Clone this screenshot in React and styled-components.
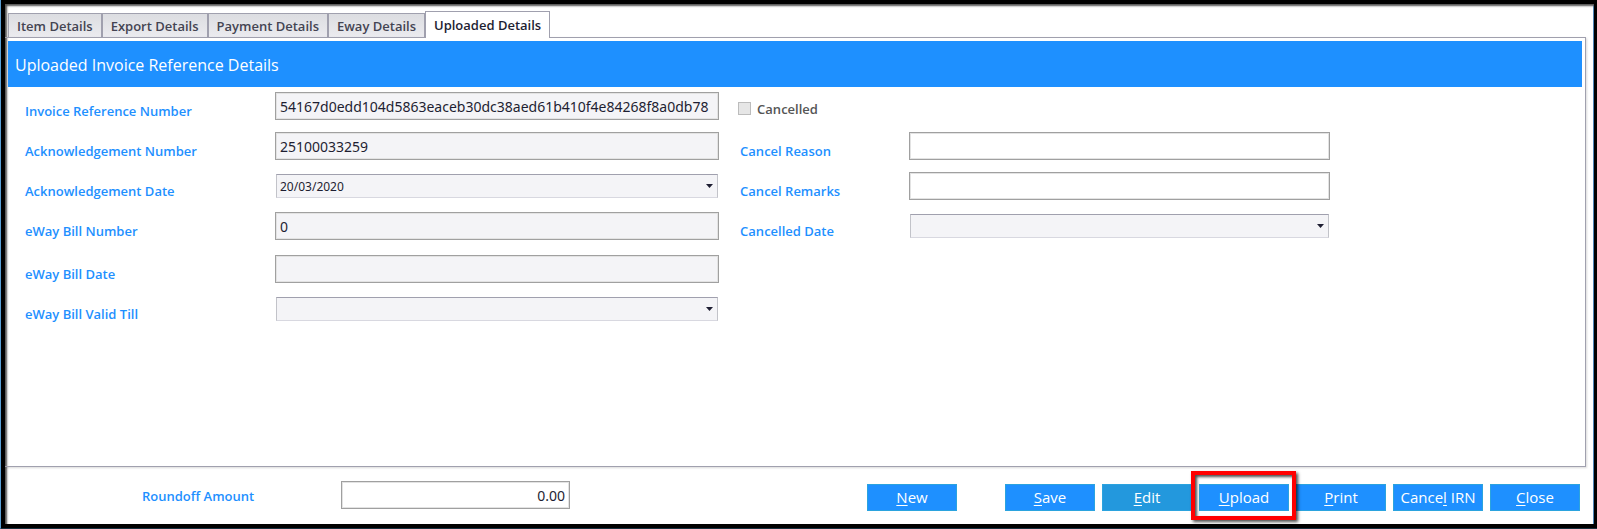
import React, {useState} from 'react';
import styled, {createGlobalStyle, css} from 'styled-components';

const colors = {
  primary: '#1e90ff',
  primaryDim: '#2398dd',
  buttonBorder: '#2ba3de',
  text: '#1e1e32',
  tabText: '#444452',
  line: '#a0a0ae',
  fieldBorder: '#a0a0a0',
  fieldInner: '#e3e3e3',
  disabled: '#f4f4f7',
  highlight: '#ff0000',
};

const tabs = [
  'Item Details',
  'Export Details',
  'Payment Details',
  'Eway Details',
  'Uploaded Details',
];

const SelectField = ({id, value}) => (
  <SelectWrap>
    <Select id={id} defaultValue={value}>
      <option value={value}>{value}</option>
    </Select>
    <Arrow viewBox="0 0 7 4" aria-hidden="true">
      <path d="M0 0h7L3.5 4z" />
    </Arrow>
  </SelectWrap>
);

const App = () => {
  const [active, setActive] = useState('Uploaded Details');

  return (
    <>
      <GlobalStyle />
      <Window>
        <Tabs role="tablist">
          {tabs.map((tab) => (
            <Tab
              key={tab}
              type="button"
              role="tab"
              aria-selected={tab === active}
              $active={tab === active}
              onClick={() => setActive(tab)}
            >
              {tab}
            </Tab>
          ))}
        </Tabs>

        <Panel>
          <Title>Uploaded Invoice Reference Details</Title>
          <Form>
            <InvoiceColumn>
              <Group>
                <Row>
                  <Label htmlFor="irn">Invoice Reference Number</Label>
                  <Input
                    id="irn"
                    readOnly
                    $muted
                    value="54167d0edd104d5863eaceb30dc38aed61b410f4e84268f8a0db78"
                  />
                </Row>
                <Row>
                  <Label htmlFor="ack-number">Acknowledgement Number</Label>
                  <Input id="ack-number" readOnly $muted value="25100033259" />
                </Row>
                <Row>
                  <Label htmlFor="ack-date">Acknowledgement Date</Label>
                  <SelectField id="ack-date" value="20/03/2020" />
                </Row>
                <Row>
                  <Label htmlFor="eway-number">eWay Bill Number</Label>
                  <Input id="eway-number" readOnly $muted value="0" />
                </Row>
              </Group>
              <Group>
                <Row>
                  <Label htmlFor="eway-date">eWay Bill Date</Label>
                  <Input id="eway-date" readOnly $muted value="" />
                </Row>
                <Row>
                  <Label htmlFor="eway-valid">eWay Bill Valid Till</Label>
                  <SelectField id="eway-valid" value="" />
                </Row>
              </Group>
            </InvoiceColumn>

            <CancelColumn>
              <Group>
                <CheckRow>
                  <Checkbox id="cancelled" type="checkbox" disabled />
                  <CheckLabel htmlFor="cancelled">Cancelled</CheckLabel>
                </CheckRow>
                <Row>
                  <CancelLabel htmlFor="reason">Cancel Reason</CancelLabel>
                  <Input id="reason" />
                </Row>
                <Row>
                  <CancelLabel htmlFor="remarks">Cancel Remarks</CancelLabel>
                  <Input id="remarks" />
                </Row>
                <Row>
                  <CancelLabel htmlFor="cancel-date">Cancelled Date</CancelLabel>
                  <SelectField id="cancel-date" value="" />
                </Row>
              </Group>
            </CancelColumn>
          </Form>
        </Panel>

        <Footer>
          <RoundoffLabel htmlFor="roundoff">Roundoff Amount</RoundoffLabel>
          <RoundoffInput id="roundoff" defaultValue="0.00" />
          <NewAction>
            <Button type="button">
              <u>N</u>ew
            </Button>
          </NewAction>
          <Actions>
            <Button type="button">
              <u>S</u>ave
            </Button>
            <Button type="button" $dim>
              <u>E</u>dit
            </Button>
            <Highlighted>
              <Button type="button">
                <u>U</u>pload
              </Button>
            </Highlighted>
            <Button type="button">
              <u>P</u>rint
            </Button>
            <Button type="button">
              Cance<u>l</u> IRN
            </Button>
            <Button type="button">
              <u>C</u>lose
            </Button>
          </Actions>
        </Footer>
      </Window>
    </>
  );
};

export default App;

const GlobalStyle = createGlobalStyle`
  * {
    box-sizing: border-box;
  }
  body {
    margin: 0;
    background: #000;
    border-left: 1px solid #5aa0d6;
    border-bottom: 1px solid #17303f;
  }
  body,
  button {
    font-family: 'Open Sans', 'Noto Sans', sans-serif;
  }
  input,
  select {
    font-family: 'Noto Sans', 'Open Sans', sans-serif;
  }
`;

const Window = styled.div`
  display: flex;
  flex-direction: column;
  min-height: calc(100vh - 1px);
  border: 4px solid #000;
  border-right-width: 3px;
  background: #fff;
  box-shadow: inset 2px 2px 2px #555, inset -1px 0 0 #4f86b8;
`;

/* tabs */
const Tabs = styled.div`
  display: flex;
  align-items: flex-end;
  padding: 7px 3px 0;
`;

const Tab = styled.button`
  height: 24px;
  padding: 0 8px;
  border: 1px solid ${colors.line};
  border-bottom: none;
  background: linear-gradient(#dcdde1, #ebebef);
  color: ${colors.tabText};
  font-size: 13px;
  font-weight: 600;
  line-height: 22px;
  white-space: nowrap;

  ${(props) =>
    props.$active &&
    css`
      position: relative;
      height: 27px;
      margin-bottom: -1px;
      background: #fff;
      color: ${colors.text};
    `}
`;

/* panel */
const Panel = styled.div`
  flex: 1;
  margin-right: 8px;
  padding: 3px 3px 0;
  border: 1px solid ${colors.line};
  border-left: none;
  box-shadow: 1px 1px 2px rgba(0, 0, 0, 0.15);
`;

const Title = styled.h1`
  margin: 0;
  padding: 2px 0 0 7px;
  background: ${colors.primary};
  color: #fff;
  font-size: 16px;
  font-weight: 400;
  line-height: 44px;
`;

const Form = styled.div`
  display: flex;
  padding: 5px 16% 20px 17px;
`;

const InvoiceColumn = styled.div`
  flex: 694;
  min-width: 0;
  margin-right: 19px;
`;

const CancelColumn = styled.div`
  flex: 592;
  min-width: 0;
`;

const Group = styled.div`
  display: grid;
  gap: 12px;

  & + & {
    margin-top: 15px;
  }
`;

const Row = styled.div`
  display: flex;
  align-items: center;
  height: 28px;
`;

const CheckRow = styled(Row)`
  padding-top: 5px;
`;

const Label = styled.label`
  flex: none;
  width: 250px;
  padding-top: 10px;
  color: ${colors.primary};
  font-size: 13px;
  font-weight: 600;
  line-height: 18px;
`;

const CancelLabel = styled(Label)`
  width: 171px;
  padding-left: 2px;
`;

const CheckLabel = styled.label`
  padding-left: 6px;
  color: #555;
  font-size: 13px;
  font-weight: 600;
  line-height: 18px;
`;

const Input = styled.input`
  flex: 1;
  min-width: 0;
  height: 28px;
  padding: 0 4px;
  border: 1px solid ${colors.fieldBorder};
  border-radius: 0;
  outline: none;
  background: ${(props) => (props.$muted ? colors.disabled : '#fff')};
  box-shadow: inset 0 0 0 1px ${colors.fieldInner};
  color: ${colors.text};
  font-size: 14px;
`;

const SelectWrap = styled.div`
  position: relative;
  flex: 1;
  display: flex;
  min-width: 0;
  padding: 0 1px;
`;

const Select = styled.select`
  appearance: none;
  width: 100%;
  height: 24px;
  padding: 0 20px 0 3px;
  border: 1px solid #c2c3c9;
  border-top-color: ${colors.line};
  border-bottom-color: #d8d8e0;
  border-radius: 0;
  background: ${colors.disabled};
  color: ${colors.text};
  font-size: 12px;
`;

const Arrow = styled.svg`
  position: absolute;
  top: 10px;
  right: 6px;
  width: 7px;
  height: 4px;
  fill: ${colors.text};
  pointer-events: none;
`;

const Checkbox = styled.input`
  appearance: none;
  width: 13px;
  height: 13px;
  margin: 0;
  border: 1px solid #bcbcbc;
  background: #e6e6e6;
`;

/* footer */
const Footer = styled.div`
  display: flex;
  align-items: flex-start;
  height: 57px;
  padding: 14px 14px 0 137px;
`;

const RoundoffLabel = styled(Label)`
  width: 199px;
  padding-top: 6px;
`;

const RoundoffInput = styled(Input)`
  flex: none;
  width: 229px;
  text-align: right;
`;

const NewAction = styled.div`
  margin: 3px 48px 0 auto;
`;

const Actions = styled.div`
  display: flex;
  gap: 7px;
  margin-top: 3px;
`;

const Button = styled.button`
  display: block;
  width: 90px;
  height: 27px;
  padding: 0;
  border: 1px solid ${colors.buttonBorder};
  background: ${(props) => (props.$dim ? colors.primaryDim : colors.primary)};
  color: #fff;
  font-size: 15px;
  line-height: 25px;
  white-space: nowrap;

  u {
    text-underline-offset: 2px;
  }
`;

/* red frame drawn over the neighbouring buttons */
const Highlighted = styled.div`
  position: relative;

  &::after {
    content: '';
    position: absolute;
    top: -13px;
    right: -7px;
    bottom: -9px;
    left: -8px;
    border: 4px solid ${colors.highlight};
    box-shadow: 2px 2px 3px rgba(0, 0, 0, 0.7),
      inset 2px 2px 3px rgba(0, 0, 0, 0.7);
    pointer-events: none;
  }
`;
